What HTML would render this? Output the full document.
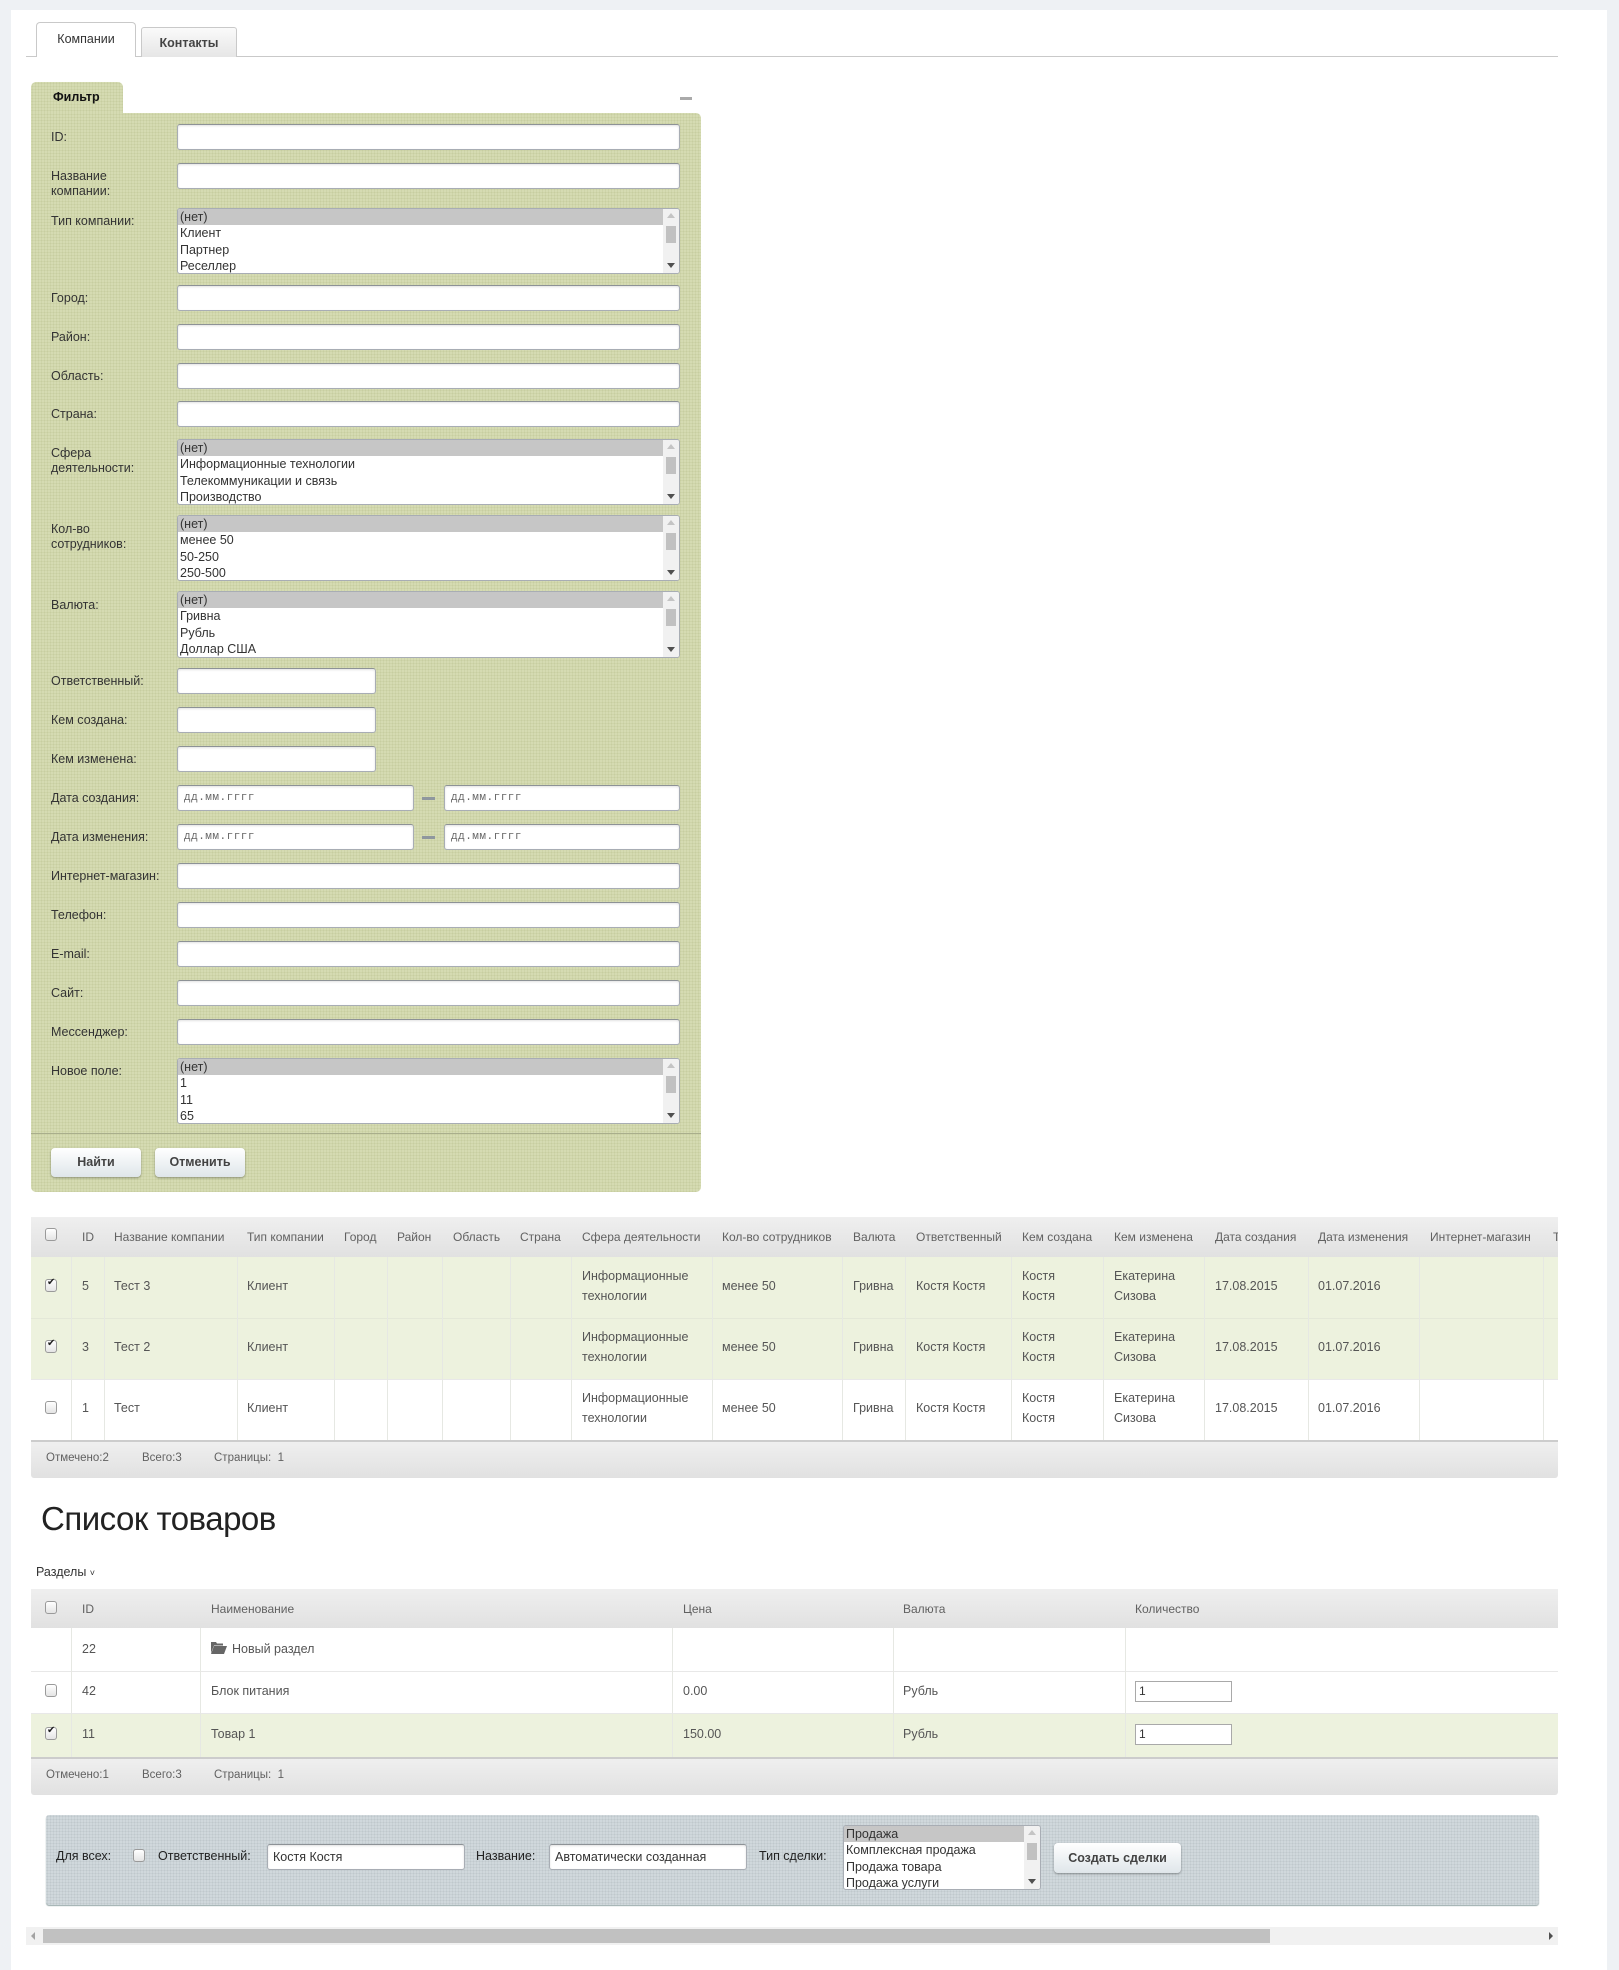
<!DOCTYPE html>
<html><head><meta charset="utf-8">
<style>
*{box-sizing:border-box;margin:0;padding:0}
html,body{width:1619px;height:1960px;overflow:hidden;background:#eef1f4;font-family:"Liberation Sans",Arial,sans-serif;font-size:12.5px;color:#535c69}
.a{position:absolute}
.page{position:absolute;left:11px;top:10px;width:1596px;height:1960px;background:#fff}
.inp{position:absolute;background:#fff;border:1px solid #a8adb4;border-top-color:#8d9296;border-radius:3px;box-shadow:inset 0 1px 2px rgba(0,0,0,.12)}
.lbl{position:absolute;left:51px;color:#333;font-size:12.5px;line-height:15px}
.sel{position:absolute;background:#fff;border:1px solid #a8adb4;border-radius:3px;overflow:hidden;font-size:12.5px;color:#333;line-height:16.4px}
.sel div{padding-left:2px;height:16.4px}
.sel .s{background:#c6c6c6}
.sb{position:absolute;right:0;top:0;bottom:0;width:16px;background:#f1f1f1}
.sb .t{position:absolute;left:3px;top:17px;width:10px;height:17px;background:#c1c1c1}
.sb .u{position:absolute;left:4px;top:4px;width:0;height:0;border-left:4px solid transparent;border-right:4px solid transparent;border-bottom:5px solid #c4c4c4}
.sb .d{position:absolute;left:4px;bottom:5px;width:0;height:0;border-left:4px solid transparent;border-right:4px solid transparent;border-top:5px solid #505050}
.ph{font-family:"Liberation Mono",monospace;font-size:11px;color:#666;padding:6px 0 0 6px;letter-spacing:.5px}
.btn{position:absolute;background:linear-gradient(#fff,#dfe6ea);border-radius:4px;box-shadow:0 1px 2px rgba(0,0,0,.35);font-weight:bold;color:#434343;text-align:center;font-size:12.5px}
.hdr{position:absolute;background:linear-gradient(#efefef,#e1e1e1)}
.th{position:absolute;color:#616161;font-size:12px;white-space:nowrap}
.td{position:absolute;color:#555;font-size:12.5px;line-height:20px;white-space:nowrap}
.cb{position:absolute;width:12px;height:13px;border:1px solid #9a9a9a;border-radius:3px;background:linear-gradient(#fff,#e4e4e4)}
.cb.c::after{content:"✔";position:absolute;left:1px;top:-3px;font-size:10px;color:#222}
.vl{position:absolute;width:1px;background:#e6e8e3}
.dot{background-color:#d5dbb2;background-image:radial-gradient(#c7cea0 0.8px,transparent 1px);background-size:3px 3px}
</style></head><body>
<div class="page"></div>

<!-- tabs -->
<div class="a" style="left:26px;top:56px;width:1532px;height:1px;background:#c9c9c9"></div>
<div class="a" style="left:36px;top:22px;width:100px;height:35px;background:#fff;border:1px solid #c9c9c9;border-bottom:none;border-radius:4px 4px 0 0;text-align:center;line-height:32px;font-size:12.5px;color:#333">Компании</div>
<div class="a" style="left:141px;top:27px;width:96px;height:30px;background:linear-gradient(#fafafa,#e6e6e6);border:1px solid #c9c9c9;border-bottom:none;border-radius:3px 3px 0 0;text-align:center;line-height:30px;font-size:12.5px;font-weight:bold;color:#444">Контакты</div>

<!-- filter -->
<div class="a dot" style="left:31px;top:82px;width:92px;height:34px;border-radius:5px 5px 0 0"></div>
<div class="a" style="left:53px;top:90px;font-weight:bold;color:#111;font-size:12.5px">Фильтр</div>
<div class="a" style="left:680px;top:97px;width:12px;height:3px;background:#aaa"></div>
<div class="a dot" style="left:31px;top:113px;width:670px;height:1079px;border-radius:0 5px 5px 5px"></div>

<div class="lbl" style="top:130px">ID:</div><div class="inp" style="left:177px;top:124px;width:503px;height:26px"></div>
<div class="lbl" style="top:169px">Название<br>компании:</div><div class="inp" style="left:177px;top:163px;width:503px;height:26px"></div>
<div class="lbl" style="top:214px">Тип компании:</div>
<div class="sel" style="left:177px;top:208px;width:503px;height:66px"><div class="s">(нет)</div><div>Клиент</div><div>Партнер</div><div>Реселлер</div><span class="sb"><i class="u"></i><i class="t"></i><i class="d"></i></span></div>
<div class="lbl" style="top:291px">Город:</div><div class="inp" style="left:177px;top:285px;width:503px;height:26px"></div>
<div class="lbl" style="top:330px">Район:</div><div class="inp" style="left:177px;top:324px;width:503px;height:26px"></div>
<div class="lbl" style="top:369px">Область:</div><div class="inp" style="left:177px;top:363px;width:503px;height:26px"></div>
<div class="lbl" style="top:407px">Страна:</div><div class="inp" style="left:177px;top:401px;width:503px;height:26px"></div>
<div class="lbl" style="top:446px">Сфера<br>деятельности:</div>
<div class="sel" style="left:177px;top:439px;width:503px;height:66px"><div class="s">(нет)</div><div>Информационные технологии</div><div>Телекоммуникации и связь</div><div>Производство</div><span class="sb"><i class="u"></i><i class="t"></i><i class="d"></i></span></div>
<div class="lbl" style="top:522px">Кол-во<br>сотрудников:</div>
<div class="sel" style="left:177px;top:515px;width:503px;height:66px"><div class="s">(нет)</div><div>менее 50</div><div>50-250</div><div>250-500</div><span class="sb"><i class="u"></i><i class="t"></i><i class="d"></i></span></div>
<div class="lbl" style="top:598px">Валюта:</div>
<div class="sel" style="left:177px;top:591px;width:503px;height:67px"><div class="s">(нет)</div><div>Гривна</div><div>Рубль</div><div>Доллар США</div><span class="sb"><i class="u"></i><i class="t"></i><i class="d"></i></span></div>
<div class="lbl" style="top:674px">Ответственный:</div><div class="inp" style="left:177px;top:668px;width:199px;height:26px"></div>
<div class="lbl" style="top:713px">Кем создана:</div><div class="inp" style="left:177px;top:707px;width:199px;height:26px"></div>
<div class="lbl" style="top:752px">Кем изменена:</div><div class="inp" style="left:177px;top:746px;width:199px;height:26px"></div>
<div class="lbl" style="top:791px">Дата создания:</div>
<div class="inp ph" style="left:177px;top:785px;width:237px;height:26px">дд.мм.гггг</div>
<div class="a" style="left:422px;top:797px;width:13px;height:3px;background:#8f979e"></div>
<div class="inp ph" style="left:444px;top:785px;width:236px;height:26px">дд.мм.гггг</div>
<div class="lbl" style="top:830px">Дата изменения:</div>
<div class="inp ph" style="left:177px;top:824px;width:237px;height:26px">дд.мм.гггг</div>
<div class="a" style="left:422px;top:836px;width:13px;height:3px;background:#8f979e"></div>
<div class="inp ph" style="left:444px;top:824px;width:236px;height:26px">дд.мм.гггг</div>
<div class="lbl" style="top:869px">Интернет-магазин:</div><div class="inp" style="left:177px;top:863px;width:503px;height:26px"></div>
<div class="lbl" style="top:908px">Телефон:</div><div class="inp" style="left:177px;top:902px;width:503px;height:26px"></div>
<div class="lbl" style="top:947px">E-mail:</div><div class="inp" style="left:177px;top:941px;width:503px;height:26px"></div>
<div class="lbl" style="top:986px">Сайт:</div><div class="inp" style="left:177px;top:980px;width:503px;height:26px"></div>
<div class="lbl" style="top:1025px">Мессенджер:</div><div class="inp" style="left:177px;top:1019px;width:503px;height:26px"></div>
<div class="lbl" style="top:1064px">Новое поле:</div>
<div class="sel" style="left:177px;top:1058px;width:503px;height:66px"><div class="s">(нет)</div><div>1</div><div>11</div><div>65</div><span class="sb"><i class="u"></i><i class="t"></i><i class="d"></i></span></div>
<div class="a" style="left:31px;top:1133px;width:670px;height:1px;background:#a9ae8c"></div>
<div class="btn" style="left:51px;top:1148px;width:90px;height:29px;line-height:29px">Найти</div>
<div class="btn" style="left:155px;top:1148px;width:90px;height:29px;line-height:29px">Отменить</div>

<!-- table 1 -->
<div class="hdr" style="left:31px;top:1217px;width:1527px;height:40px"></div>
<div class="a" style="left:31px;top:1257px;width:1527px;height:122px;background:#edf2de"></div>
<div class="a" style="left:31px;top:1318px;width:1527px;height:1px;background:#e4e8d8"></div>
<div class="a" style="left:31px;top:1379px;width:1527px;height:1px;background:#e8e8e8"></div>
<div class="a" style="left:31px;top:1440px;width:1527px;height:2px;background:#ccc"></div>
<div class="hdr" style="left:31px;top:1442px;width:1527px;height:36px;border-radius:0 0 3px 3px"></div>
<div class="vl" style="left:71px;top:1257px;height:183px"></div>
<div class="vl" style="left:104px;top:1257px;height:183px"></div>
<div class="vl" style="left:237px;top:1257px;height:183px"></div>
<div class="vl" style="left:334px;top:1257px;height:183px"></div>
<div class="vl" style="left:387px;top:1257px;height:183px"></div>
<div class="vl" style="left:442px;top:1257px;height:183px"></div>
<div class="vl" style="left:510px;top:1257px;height:183px"></div>
<div class="vl" style="left:571px;top:1257px;height:183px"></div>
<div class="vl" style="left:712px;top:1257px;height:183px"></div>
<div class="vl" style="left:842px;top:1257px;height:183px"></div>
<div class="vl" style="left:905px;top:1257px;height:183px"></div>
<div class="vl" style="left:1011px;top:1257px;height:183px"></div>
<div class="vl" style="left:1103px;top:1257px;height:183px"></div>
<div class="vl" style="left:1204px;top:1257px;height:183px"></div>
<div class="vl" style="left:1308px;top:1257px;height:183px"></div>
<div class="vl" style="left:1419px;top:1257px;height:183px"></div>
<div class="vl" style="left:1543px;top:1257px;height:183px"></div>

<div class="cb" style="left:45px;top:1228px"></div>
<div class="th" style="left:82px;top:1230px">ID</div>
<div class="th" style="left:114px;top:1230px">Название компании</div>
<div class="th" style="left:247px;top:1230px">Тип компании</div>
<div class="th" style="left:344px;top:1230px">Город</div>
<div class="th" style="left:397px;top:1230px">Район</div>
<div class="th" style="left:453px;top:1230px">Область</div>
<div class="th" style="left:520px;top:1230px">Страна</div>
<div class="th" style="left:582px;top:1230px">Сфера деятельности</div>
<div class="th" style="left:722px;top:1230px">Кол-во сотрудников</div>
<div class="th" style="left:853px;top:1230px">Валюта</div>
<div class="th" style="left:916px;top:1230px">Ответственный</div>
<div class="th" style="left:1022px;top:1230px">Кем создана</div>
<div class="th" style="left:1114px;top:1230px">Кем изменена</div>
<div class="th" style="left:1215px;top:1230px">Дата создания</div>
<div class="th" style="left:1318px;top:1230px">Дата изменения</div>
<div class="th" style="left:1430px;top:1230px">Интернет-магазин</div>
<div class="th" style="left:1553px;top:1230px;width:5px;overflow:hidden">Т</div>

<!-- rows -->
<div class="cb c" style="left:45px;top:1279px"></div>
<div class="td" style="left:82px;top:1276px">5</div><div class="td" style="left:114px;top:1276px">Тест 3</div><div class="td" style="left:247px;top:1276px">Клиент</div>
<div class="td" style="left:582px;top:1266px">Информационные<br>технологии</div><div class="td" style="left:722px;top:1276px">менее 50</div><div class="td" style="left:853px;top:1276px">Гривна</div><div class="td" style="left:916px;top:1276px">Костя Костя</div><div class="td" style="left:1022px;top:1266px">Костя<br>Костя</div><div class="td" style="left:1114px;top:1266px">Екатерина<br>Сизова</div><div class="td" style="left:1215px;top:1276px">17.08.2015</div><div class="td" style="left:1318px;top:1276px">01.07.2016</div>

<div class="cb c" style="left:45px;top:1340px"></div>
<div class="td" style="left:82px;top:1337px">3</div><div class="td" style="left:114px;top:1337px">Тест 2</div><div class="td" style="left:247px;top:1337px">Клиент</div>
<div class="td" style="left:582px;top:1327px">Информационные<br>технологии</div><div class="td" style="left:722px;top:1337px">менее 50</div><div class="td" style="left:853px;top:1337px">Гривна</div><div class="td" style="left:916px;top:1337px">Костя Костя</div><div class="td" style="left:1022px;top:1327px">Костя<br>Костя</div><div class="td" style="left:1114px;top:1327px">Екатерина<br>Сизова</div><div class="td" style="left:1215px;top:1337px">17.08.2015</div><div class="td" style="left:1318px;top:1337px">01.07.2016</div>

<div class="cb" style="left:45px;top:1401px"></div>
<div class="td" style="left:82px;top:1398px">1</div><div class="td" style="left:114px;top:1398px">Тест</div><div class="td" style="left:247px;top:1398px">Клиент</div>
<div class="td" style="left:582px;top:1388px">Информационные<br>технологии</div><div class="td" style="left:722px;top:1398px">менее 50</div><div class="td" style="left:853px;top:1398px">Гривна</div><div class="td" style="left:916px;top:1398px">Костя Костя</div><div class="td" style="left:1022px;top:1388px">Костя<br>Костя</div><div class="td" style="left:1114px;top:1388px">Екатерина<br>Сизова</div><div class="td" style="left:1215px;top:1398px">17.08.2015</div><div class="td" style="left:1318px;top:1398px">01.07.2016</div>

<div class="th" style="left:46px;top:1452px;font-size:11.5px">Отмечено:2</div>
<div class="th" style="left:142px;top:1452px;font-size:11.5px">Всего:3</div>
<div class="th" style="left:214px;top:1452px;font-size:11.5px">Страницы:&nbsp; 1</div>

<!-- products -->
<div class="a" style="left:41px;top:1500px;font-size:33px;color:#222;font-weight:300;letter-spacing:-0.5px">Список товаров</div>
<div class="a" style="left:36px;top:1565px;font-size:12.5px;color:#333">Разделы <span style="font-size:9px">˅</span></div>

<div class="hdr" style="left:31px;top:1589px;width:1527px;height:39px"></div>
<div class="a" style="left:31px;top:1671px;width:1527px;height:1px;background:#e8e8e8"></div>
<div class="a" style="left:31px;top:1713px;width:1527px;height:1px;background:#e8e8e8"></div>
<div class="a" style="left:31px;top:1714px;width:1527px;height:43px;background:#edf2de"></div>
<div class="a" style="left:31px;top:1757px;width:1527px;height:2px;background:#ccc"></div>
<div class="hdr" style="left:31px;top:1759px;width:1527px;height:36px;border-radius:0 0 3px 3px"></div>
<div class="vl" style="left:71px;top:1628px;height:129px"></div>
<div class="vl" style="left:200px;top:1628px;height:129px"></div>
<div class="vl" style="left:672px;top:1628px;height:129px"></div>
<div class="vl" style="left:893px;top:1628px;height:129px"></div>
<div class="vl" style="left:1125px;top:1628px;height:129px"></div>

<div class="cb" style="left:45px;top:1601px"></div>
<div class="th" style="left:82px;top:1602px">ID</div>
<div class="th" style="left:211px;top:1602px">Наименование</div>
<div class="th" style="left:683px;top:1602px">Цена</div>
<div class="th" style="left:903px;top:1602px">Валюта</div>
<div class="th" style="left:1135px;top:1602px">Количество</div>

<div class="td" style="left:82px;top:1639px">22</div>
<svg class="a" style="left:211px;top:1641px" width="16" height="13" viewBox="0 0 16 13"><path d="M0 1h5l1 1.5h6v2H3L0 12z" fill="#666"/><path d="M3 5h13l-3 8H0z" fill="#666"/></svg>
<div class="td" style="left:232px;top:1639px">Новый раздел</div>

<div class="cb" style="left:45px;top:1684px"></div>
<div class="td" style="left:82px;top:1681px">42</div><div class="td" style="left:211px;top:1681px">Блок питания</div><div class="td" style="left:683px;top:1681px">0.00</div><div class="td" style="left:903px;top:1681px">Рубль</div>
<div class="a" style="left:1135px;top:1681px;width:97px;height:21px;border:1px solid #a9a9a9;background:#fff;font-size:12px;padding:2px 3px;color:#333">1</div>

<div class="cb c" style="left:45px;top:1727px"></div>
<div class="td" style="left:82px;top:1724px">11</div><div class="td" style="left:211px;top:1724px">Товар 1</div><div class="td" style="left:683px;top:1724px">150.00</div><div class="td" style="left:903px;top:1724px">Рубль</div>
<div class="a" style="left:1135px;top:1724px;width:97px;height:21px;border:1px solid #a9a9a9;background:#fff;font-size:12px;padding:2px 3px;color:#333">1</div>

<div class="th" style="left:46px;top:1769px;font-size:11.5px">Отмечено:1</div>
<div class="th" style="left:142px;top:1769px;font-size:11.5px">Всего:3</div>
<div class="th" style="left:214px;top:1769px;font-size:11.5px">Страницы:&nbsp; 1</div>

<!-- bottom panel -->
<div class="a" style="left:46px;top:1815px;width:1493px;height:90px;background-color:#d0d8dc;background-image:radial-gradient(#bfc8cc 0.8px,transparent 1px);background-size:3px 3px;border-radius:3px;box-shadow:0 1px 1px #9aa"></div>
<div class="td" style="left:56px;top:1846px;color:#222">Для всех:</div>
<div class="cb" style="left:133px;top:1849px"></div>
<div class="td" style="left:158px;top:1846px;color:#222">Ответственный:</div>
<div class="inp" style="left:267px;top:1844px;width:198px;height:26px;font-size:12.5px;color:#333;padding:5px 5px">Костя Костя</div>
<div class="td" style="left:476px;top:1846px;color:#222">Название:</div>
<div class="inp" style="left:549px;top:1844px;width:198px;height:26px;font-size:12.5px;color:#333;padding:5px 5px">Автоматически созданная</div>
<div class="td" style="left:759px;top:1846px;color:#222">Тип сделки:</div>
<div class="sel" style="left:843px;top:1825px;width:198px;height:65px;line-height:16px"><div class="s">Продажа</div><div>Комплексная продажа</div><div>Продажа товара</div><div>Продажа услуги</div><span class="sb"><i class="u"></i><i class="t"></i><i class="d"></i></span></div>
<div class="btn" style="left:1054px;top:1843px;width:127px;height:30px;line-height:30px">Создать сделки</div>

<!-- scrollbar -->
<div class="a" style="left:26px;top:1927px;width:1532px;height:18px;background:#f1f1f1"></div>
<div class="a" style="left:43px;top:1929px;width:1227px;height:14px;background:#c1c1c1"></div>
<div class="a" style="left:31px;top:1932px;width:0;height:0;border-top:4px solid transparent;border-bottom:4px solid transparent;border-right:4px solid #a3a3a3"></div>
<div class="a" style="left:1549px;top:1932px;width:0;height:0;border-top:4px solid transparent;border-bottom:4px solid transparent;border-left:4px solid #505050"></div>
</body></html>
